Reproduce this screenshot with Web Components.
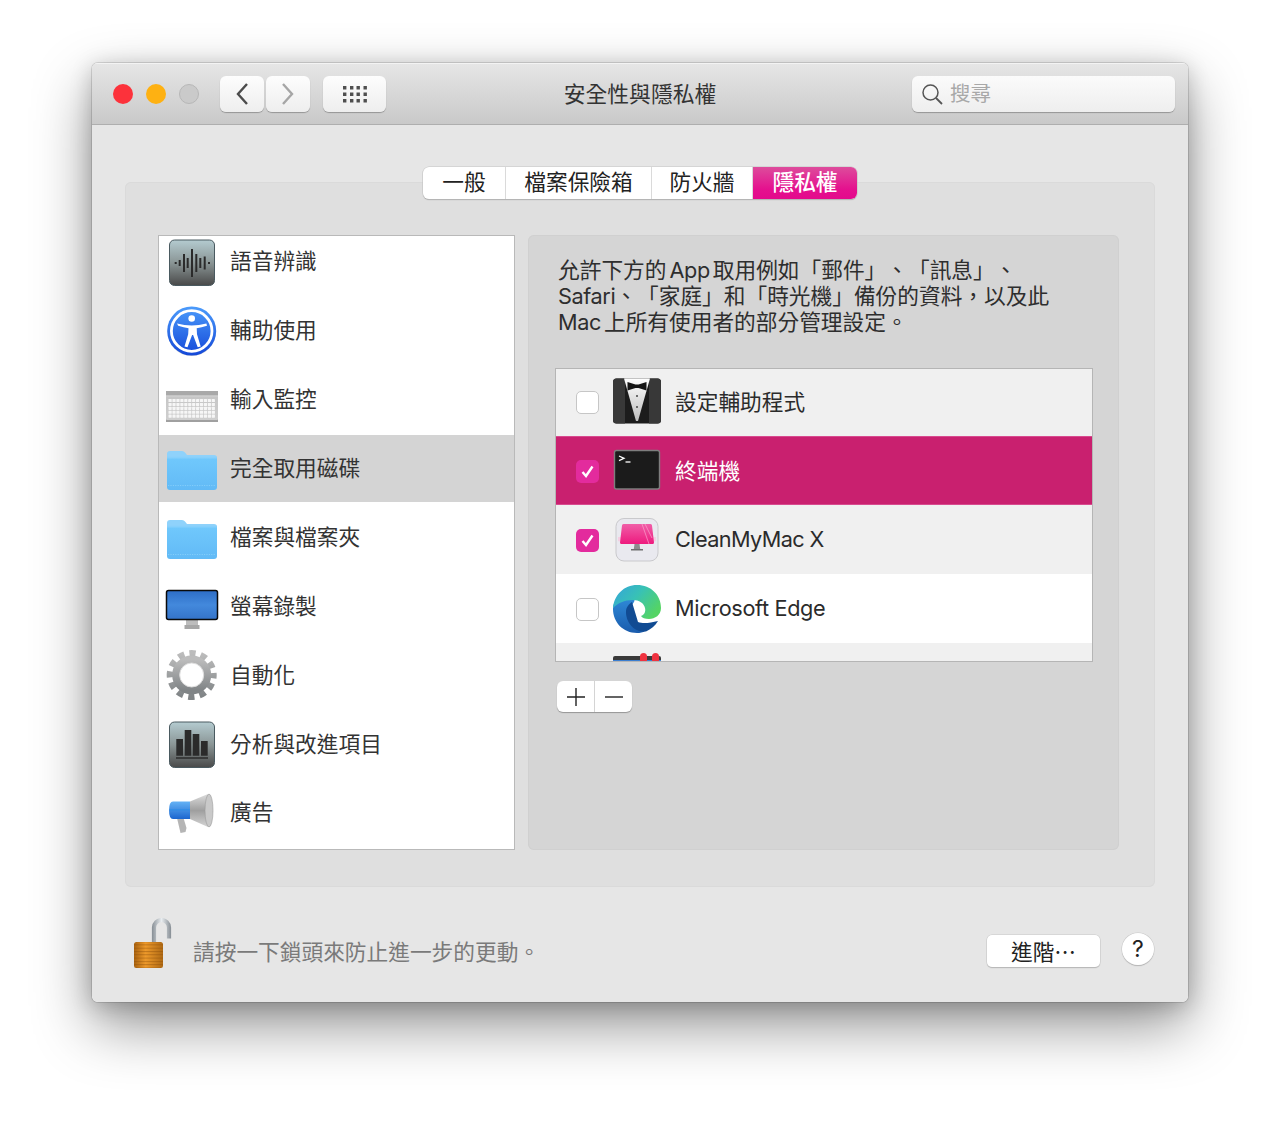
<!DOCTYPE html>
<html lang="zh-Hant">
<head>
<meta charset="utf-8">
<title>安全性與隱私權</title>
<style>
  html, body { margin: 0; background: #fff; }
  body {
    height: 1124px;
    overflow: hidden;
    font-family: "Inter", "Noto Sans CJK TC", sans-serif;
    font-size: 21.7px;
    color: #333;
    text-spacing-trim: space-all;
  }
</style>
</head>
<body>
<mac-window>
  <title-bar slot="top" heading="安全性與隱私權"></title-bar>
  <pref-box>
    <tab-bar slot="tabs">
      <tab-item style="width:83px">一般</tab-item>
      <tab-item style="width:146px">檔案保險箱</tab-item>
      <tab-item style="width:101px">防火牆</tab-item>
      <tab-item style="width:104px" active>隱私權</tab-item>
    </tab-bar>
    <side-list slot="side">
      <side-row icon="speech">語音辨識</side-row>
      <side-row icon="access">輔助使用</side-row>
      <side-row icon="keyboard">輸入監控</side-row>
      <side-row icon="folder" selected>完全取用磁碟</side-row>
      <side-row icon="folder">檔案與檔案夾</side-row>
      <side-row icon="display">螢幕錄製</side-row>
      <side-row icon="gear">自動化</side-row>
      <side-row icon="chart">分析與改進項目</side-row>
      <side-row icon="horn">廣告</side-row>
    </side-list>
    <privacy-panel slot="main">
      允許下方的<span style="margin:0 3px;letter-spacing:-.4px">App</span>取用例如「郵件」、「訊息」、<br><span style="letter-spacing:-.4px">Safari</span>、「家庭」和「時光機」備份的資料，以及此<br><span style="margin-right:3px;letter-spacing:-.4px">Mac</span>上所有使用者的部分管理設定。
      <app-list slot="list">
        <app-row icon="tux" tone="gray">設定輔助程式</app-row>
        <app-row icon="term" tone="sel" checked>終端機</app-row>
        <app-row icon="clean" tone="gray" checked style="letter-spacing:-.6px;--label-top:2px">CleanMyMac X</app-row>
        <app-row icon="edge" tone="white" style="letter-spacing:-.35px;--label-top:2px">Microsoft Edge</app-row>
        <app-row icon="tool" tone="gray"></app-row>
      </app-list>
    </privacy-panel>
  </pref-box>
  <lock-footer slot="bottom">請按一下鎖頭來防止進一步的更動。</lock-footer>
</mac-window>

<script>
class Shadowed extends HTMLElement {
  constructor() {
    super();
    this.attachShadow({ mode: 'open' });
    this.shadowRoot.innerHTML = `<style>${this.constructor.css}</style>${this.constructor.html}`;
  }
}

// row icons: 56x56 box for the side list, 50x50 for the app list
function keyboardKeys() {
  let out = '';
  for (let r = 0; r < 5; r++) {
    for (let c = 0; c < 12; c++) {
      out += `<rect x="${4.5 + c * 3.93}" y="${26 + r * 3.9}" width="3.2" height="3.1" rx=".4" fill="#f6f6f6"/>`;
    }
  }
  return out;
}

const tile = `<defs><linearGradient id="t" x1="0" y1="0" x2="0" y2="1"><stop offset="0" stop-color="#b4cbd0"/><stop offset=".5" stop-color="#8a9595"/><stop offset="1" stop-color="#494949"/></linearGradient></defs>
  <rect x="5.5" y="5" width="45" height="45.5" rx="5" fill="url(#t)" stroke="#4a5a60" stroke-width="1"/>`;

const folder = `<defs><linearGradient id="f" x1="0" y1="0" x2="0" y2="1"><stop offset="0" stop-color="#70c8fc"/><stop offset="1" stop-color="#62baf6"/></linearGradient></defs>
  <path d="M3 13q0-3 3-3h12q2 0 3 1.5l2 2.5h27q3 0 3 3v4H3z" fill="#8fd2fb"/>
  <path d="M3 17h50v29q0 3-3 3H6q-3 0-3-3z" fill="url(#f)"/>
  <path d="M3 15.8h50v1.6H3z" fill="#86d0fc"/>
  <path d="M4 44.5h48" stroke="#8ad2fb" stroke-width=".8" stroke-dasharray="1.2 1.2"/>`;

const ICONS = {
  speech: `${tile}<path d="M11.7 27v2M15.7 25v6M20 19v18M23.7 23v10M28 14v28M32.3 19v18M36.3 23v10M40.7 21.500v13M45 27v2" stroke="#2b2b2b" stroke-width="2" fill="none"/>`,
  access: `<defs><linearGradient id="a" x1="0" y1="0" x2="0" y2="1"><stop offset="0" stop-color="#4b9bfb"/><stop offset="1" stop-color="#1448d8"/></linearGradient></defs>
    <ellipse cx="27.700" cy="28" rx="24" ry="24" fill="#999" opacity=".45"/>
    <circle cx="27.700" cy="27" r="24.500" fill="url(#a)"/>
    <circle cx="27.700" cy="27" r="20.300" fill="none" stroke="#fff" stroke-width="2.800"/>
    <circle cx="27.700" cy="14.500" r="3.300" fill="#fff"/>
    <path d="M13 19.500c5 1.300 10 2 14.700 2s9.700-.7 14.700-2l.6 2.200c-3.700 1.300-7.300 2-10.300 2.500l.3 6 3.700 12.300-3 .8-4.600-12.300h-1l-4.600 12.300-3-.8 3.700-12.300.3-6c-3-.5-6.600-1.200-10.300-2.500z" fill="#fff"/>`,
  keyboard: `<defs><linearGradient id="k" x1="0" y1="0" x2="0" y2="1"><stop offset="0" stop-color="#c4c4c4"/><stop offset="1" stop-color="#cfcfcf"/></linearGradient></defs>
    <rect x="2" y="46" width="52" height="3" fill="#777" opacity=".7"/>
    <rect x="2" y="18" width="52" height="29" rx="1" fill="url(#k)"/>
    <rect x="2" y="18" width="52" height="4.500" fill="#a9a9a9"/>
    <rect x="2" y="22.500" width="52" height="1" fill="#d4d4d4"/>
    ${keyboardKeys()}`,
  folder,
  display: `<defs><linearGradient id="d" x1="0" y1="0" x2="0" y2="1"><stop offset="0" stop-color="#2d6dc6"/><stop offset=".5" stop-color="#4389dc"/><stop offset="1" stop-color="#3473c8"/></linearGradient></defs>
    <path d="M22 40h12v6H22z" fill="#bdbdbd"/><path d="M20.500 46h15v4h-15z" fill="#a7a7a7"/>
    <rect x="2.500" y="11.500" width="51" height="29" rx="2" fill="url(#d)" stroke="#0a0a0a" stroke-width="1.500"/>`,
  gear: `<defs><linearGradient id="g" x1="0" y1="0" x2="0" y2="1"><stop offset="0" stop-color="#bcbcbc"/><stop offset="1" stop-color="#808486"/></linearGradient></defs>
    <circle cx="27.700" cy="27" r="21.500" fill="none" stroke="url(#g)" stroke-width="7" stroke-dasharray="6.260 5" stroke-dashoffset="3"/>
    <circle cx="27.700" cy="27" r="15.500" fill="none" stroke="url(#g)" stroke-width="8"/>
    <circle cx="27.700" cy="27" r="12" fill="#fff" stroke="#dcdcdc" stroke-width="1"/>`,
  chart: `${tile}<path d="M12.300 22h6.700v16.800h-6.700zM20.700 13h6.600v25.800h-6.600zM28.700 17h6.600v21.800h-6.600zM37 24h6.700v14.800H37z" fill="#2b2b2b"/><path d="M12 41h32" stroke="#2b2b2b" stroke-width="1.500"/>`,
  horn: `<defs><linearGradient id="b" x1="0" y1="0" x2="0" y2="1"><stop offset="0" stop-color="#64b2f5"/><stop offset="1" stop-color="#1c66cf"/></linearGradient>
    <linearGradient id="c" x1="0" y1="0" x2="0" y2="1"><stop offset="0" stop-color="#dcdcdc"/><stop offset=".5" stop-color="#9f9f9f"/><stop offset="1" stop-color="#d4d4d4"/></linearGradient></defs>
    <path d="M13 32l3.500 15 5-1 1-4-3-10z" fill="#b5b5b5"/>
    <path d="M26 15.500L44 8v33l-18-8z" fill="url(#c)"/>
    <ellipse cx="45" cy="24.500" rx="4" ry="16.500" fill="#c9c9c9" stroke="#9a9a9a" stroke-width=".6"/>
    <path d="M9 15.500h17v17.500H9q-4 0-4-8.700t4-8.800z" fill="url(#b)"/>
    <path d="M5.500 23h20.500v1.500H5.500z" fill="#1c8ae8" opacity=".4"/>`,
  tux: `<defs><linearGradient id="s" x1="0" y1="0" x2="0" y2="1"><stop offset="0" stop-color="#fff"/><stop offset="1" stop-color="#bdbdbd"/></linearGradient></defs>
    <rect x="1" y="2.500" width="48" height="45" rx="3.500" fill="#1c1c1c"/>
    <path d="M1 6q0-3.500 3.500-3.500H13v45H4.500Q1 47.500 1 44zM37 2.500h8.500Q49 2.500 49 6v38q0 3.500-3.500 3.500H37z" fill="#383838"/>
    <path d="M12 2.500h26L26 45h-2z" fill="url(#s)"/>
    <path d="M15.500 6l8 2.500h3l8-2.500v8.500l-8-2.500h-3l-8 2.500z" fill="#151515"/>
    <circle cx="25" cy="20" r="1" fill="#444"/><circle cx="25" cy="31" r="1" fill="#444"/>`,
  term: `<g transform="translate(0 3)"><rect x="2.500" y="2.500" width="45" height="38.500" rx="2" fill="#1b1b1b" stroke="#7e7e7e" stroke-width="1.400"/>
    <path d="M7 8l5 2.300-5 2.300" fill="none" stroke="#fff" stroke-width="1.300"/><path d="M13.500 14h5" stroke="#fff" stroke-width="1.300"/></g>`,
  clean: `<defs><linearGradient id="m" x1="0" y1="0" x2="0" y2="1"><stop offset="0" stop-color="#f05ea8"/><stop offset="1" stop-color="#ee1a7e"/></linearGradient></defs>
    <g transform="translate(0 3)"><rect x="4" y="1.500" width="42" height="42.500" rx="8" fill="#e9e9ef" stroke="#c9c9cc"/>
    <path d="M6 24c8 3 30 3 38 0v-4H6z" fill="#f8c7de" opacity=".8"/>
    <path d="M10 8.500q0-1.500 1.500-1.500h27q1.500 0 1.500 1.500l2 17q0 1.500-1.500 1.500h-31Q8 27 8 25.500z" fill="url(#m)"/>
    <path d="M30 7l7 20M33 7l7 14" stroke="#fbb1d6" stroke-width=".6" fill="none"/>
    <path d="M22.500 27h5l.7 5h-6.400z" fill="#8d8d8d"/><path d="M19 32h12v1.500H19z" fill="#6d6d6d"/></g>`,
  edge: `<defs><linearGradient id="e1" x1="0" y1="0" x2="1" y2=".6"><stop offset="0" stop-color="#34a3dc"/><stop offset=".5" stop-color="#38c1b6"/><stop offset="1" stop-color="#54d465"/></linearGradient>
    <linearGradient id="e2" x1="0" y1="0" x2="0" y2="1"><stop offset="0" stop-color="#2f8ad8"/><stop offset="1" stop-color="#1a5cad"/></linearGradient></defs>
    <g transform="translate(1 2)">
    <path d="M0 24C0 20 1 18 3 16c5-4 12-4 17-2 3 1 1 3-1 6-2 4-2 9 1 14 2 4 6 8 12 12-2 1.500-5 2-8 2C10 48 0 37 0 24z" fill="url(#e2)"/>
    <path d="M13 27c0-5 3-8 6-10l6 20c5 2 12 1 20-1-3 5-7 8-12 10.500C22 48 13 38 13 27z" fill="#114b93"/>
    <path d="M0 23C1 10 11 0 24 0c14 0 24 10 24 23 0 7-6 11-12 11-4 0-7-1-8-3 3-1 5-4 4-8-1-5-6-8-12-8C11 15 5 18 0 23z" fill="url(#e1)"/>
    </g>`,
  tool: `<defs><linearGradient id="u" x1="0" y1="0" x2="0" y2="1"><stop offset="0" stop-color="#3a3a3a"/><stop offset=".1" stop-color="#3a3a3a"/><stop offset=".11" stop-color="#3b7ed0"/></linearGradient></defs>
    <rect x="1" y="4" width="48" height="40" rx="2" fill="url(#u)"/>
    <rect x="28" y="1" width="7" height="20" rx="3.500" fill="#ef3340"/><rect x="40" y="1" width="7" height="20" rx="3.500" fill="#ef3340"/>`
};

class MacWindow extends Shadowed {
  static css = `
    :host { display: block; width: 1096px; height: 939px; margin: 63px 0 0 92px; }
    .win {
      display: flex; flex-direction: column; height: 100%; box-sizing: border-box;
      background: #e6e6e6; border-radius: 6px; overflow: hidden;
    }
    .shade { height: 100%; border-radius: 6px;
      box-shadow: 0 24px 58px rgba(0,0,0,.42), 0 0 0 1px rgba(0,0,0,.12), 0 4px 22px rgba(0,0,0,.2); }`;
  static html = `<div class="shade"><div class="win"><slot name="top"></slot><slot></slot><slot name="bottom"></slot></div></div>`;
}

class TitleBar extends Shadowed {
  static css = `
    :host { display: block; }
    .bar {
      display: grid; grid-template-columns: minmax(0, 1fr) auto minmax(0, 1fr); align-items: center;
      height: 62px; box-sizing: border-box; padding: 0 13px;
      background: linear-gradient(#e6e6e6, #c9c9c9);
      border-bottom: 1px solid #aeaeae; box-shadow: inset 0 1px 0 #f3f3f3;
    }
    .left { display: flex; align-items: center; padding-left: 8px; }
    .dot { width: 20px; height: 20px; border-radius: 50%; margin-right: 13px; box-sizing: border-box; }
    .r { background: #fc323b; } .y { background: #feb112; }
    .g { background: #cacaca; border: 1px solid #b7b7b7; }
    .nav { display: flex; gap: 2px; margin-left: 8px; }
    .btn {
      height: 36px; width: 44px; border-radius: 6px; display: flex; align-items: center; justify-content: center;
      background: linear-gradient(#fdfdfd, #eeeeee); box-shadow: 0 1px 1px rgba(0,0,0,.28);
    }
    .wide { width: 63px; margin-left: 13px; }
    h1 { margin: -3px 0 0; font: inherit; font-size: 21.8px; color: #333; }
    .search {
      justify-self: end; width: 263px; height: 36px; border-radius: 6px; box-sizing: border-box; padding-left: 9px;
      display: flex; align-items: center; gap: 7px; color: #a8a8a8;
      background: linear-gradient(#fbfbfb, #eeeeee); box-shadow: 0 1px 1px rgba(0,0,0,.28);
    }
    .search span { margin-top: -4px; font-size: 20.500px; }`;
  static html = `
    <div class="bar">
      <div class="left">
        <div class="dot r"></div><div class="dot y"></div><div class="dot g"></div>
        <div class="nav">
          <div class="btn"><svg width="14" height="24" viewBox="0 0 14 24"><path d="M12 2L3 12l9 10" fill="none" stroke="#4c4c4c" stroke-width="2.400"/></svg></div>
          <div class="btn"><svg width="14" height="24" viewBox="0 0 14 24"><path d="M2 2l9 10-9 10" fill="none" stroke="#a6a6a6" stroke-width="2.400"/></svg></div>
        </div>
        <div class="btn wide"><svg width="26" height="18" viewBox="0 0 26 18" fill="#4f4f4f">
          <path d="M1 1h3.400v3.400H1zM8 1h3.400v3.400H8zM14.500 1h3.400v3.400h-3.400zM21.500 1h3.400v3.400h-3.400zM1 7.500h3.400v3.400H1zM8 7.500h3.400v3.400H8zM14.500 7.500h3.400v3.400h-3.400zM21.500 7.500h3.400v3.400h-3.400zM1 14h3.400v3.400H1zM8 14h3.400v3.400H8zM14.500 14h3.400v3.400h-3.400zM21.500 14h3.400v3.400h-3.400z"/></svg></div>
      </div>
      <h1></h1>
      <div class="search">
        <svg width="22" height="22" viewBox="0 0 22 22"><circle cx="9.500" cy="9.500" r="7.500" fill="none" stroke="#555" stroke-width="1.500"/><path d="M15 15l6 6" stroke="#555" stroke-width="1.800"/></svg>
        <span>搜尋</span>
      </div>
    </div>`;
  connectedCallback() { this.shadowRoot.querySelector('h1').textContent = this.getAttribute('heading'); }
}

class PrefBox extends Shadowed {
  static css = `
    :host { display: block; margin: 57px 33px 0; height: 705px; }
    .box { height: 100%; background: #dfdfdf; border-radius: 6px; box-shadow: inset 0 0 0 1px #dadada; display: flex; flex-direction: column; align-items: center; }
    .tabs { margin-top: -15px; height: 32px; }
    .cols { display: flex; gap: 13px; margin-top: 36px; height: 615px; align-self: stretch; padding: 0 36px 0 33px; }`;
  static html = `<div class="box"><div class="tabs"><slot name="tabs"></slot></div>
    <div class="cols"><slot name="side"></slot><slot name="main"></slot></div></div>`;
}

class TabBar extends Shadowed {
  static css = `
    :host { display: flex; height: 32px; border-radius: 6px; background: #fff; box-shadow: 0 0 0 .5px #c4c4c4, 0 1px 1px rgba(0,0,0,.28); overflow: hidden; }`;
  static html = `<slot></slot>`;
}

class TabItem extends Shadowed {
  static css = `
    :host { display: flex; align-items: center; justify-content: center; box-sizing: border-box; padding-bottom: 2px; color: #222; border-right: 1px solid #dadada; line-height: 30px; white-space: nowrap; }
    :host([active]) { color: #fff; font-weight: 500; border-right: 0;
      background: linear-gradient(#dd4c9c, #e5108e 70%, #e30a8c); }`;
  static html = `<slot></slot>`;
}

class SideList extends Shadowed {
  static css = `
    :host { display: block; width: 357px; height: 615px; box-sizing: border-box; background: #fff; border: 1px solid #b9b9b9; overflow: hidden; }
    .inner { display: flex; flex-direction: column; gap: 1.900px; margin-top: -7.700px; }`;
  static html = `<div class="inner"><slot></slot></div>`;
}

class SideRow extends Shadowed {
  static css = `
    :host { display: flex; align-items: center; height: 67px; padding-left: 5px; color: #333; }
    :host([selected]) { background: #d4d4d4; }
    #i { display: contents; }
    svg { flex: none; display: block; margin: 2px 10px 0 0; }
    .label { margin-top: -4px; }`;
  static html = `<span id="i"></span><span class="label"><slot></slot></span>`;
  connectedCallback() {
    this.shadowRoot.getElementById('i').innerHTML =
      `<svg width="56" height="56" viewBox="0 0 56 56">${ICONS[this.getAttribute('icon')]}</svg>`;
  }
}

class PrivacyPanel extends Shadowed {
  static css = `
    :host { display: block; width: 591px; height: 615px; box-sizing: border-box; padding: 22px 26px 0 27px; background: #d5d5d5; border-radius: 6px; box-shadow: inset 0 0 0 1px #d0d0d0; }
    p { margin: 0 0 33px 3px; line-height: 26px; color: #2e2e2e; white-space: nowrap; height: 78px; }
    .tools { display: flex; width: 75px; height: 31px; margin: 19px 0 0 2px; background: #fff; border-radius: 6px; box-shadow: 0 1px 1px rgba(0,0,0,.3); }
    .tools div { flex: 1; display: flex; align-items: center; justify-content: center; }
    .tools div + div { border-left: 1px solid #d4d4d4; }`;
  static html = `<p><slot></slot></p><slot name="list"></slot>
    <div class="tools">
      <div><svg width="20" height="20" viewBox="0 0 20 20"><path d="M10 1v18M1 10h18" stroke="#222" stroke-width="1.400"/></svg></div>
      <div><svg width="20" height="20" viewBox="0 0 20 20"><path d="M1 10h18" stroke="#222" stroke-width="1.400"/></svg></div>
    </div>`;
}

class AppList extends Shadowed {
  static css = `
    :host { display: block; width: 538px; height: 294px; box-sizing: border-box; background: #fff; border: 1px solid #b5b5b5; overflow: hidden; }
    .inner { margin-top: -2px; }`;
  static html = `<div class="inner"><slot></slot></div>`;
}

class AppRow extends Shadowed {
  static css = `
    :host { display: flex; align-items: center; height: 68.900px; box-sizing: border-box; padding-left: 20px; color: #2b2b2b; }
    :host([tone="gray"]) { background: #f0f0f0; }
    :host([tone="white"]) { background: #fff; }
    :host([tone="sel"]) { background: #c9206f; color: #fff; box-shadow: inset 0 1px 0 #d84a8e, inset 0 -1px 0 #d84a8e; }
    .box { width: 23px; height: 23px; margin-top: 3px; border-radius: 5px; box-sizing: border-box; background: #fff; border: 1px solid #c6c6c6; margin-right: 13px; flex: none; display: flex; align-items: center; justify-content: center; }
    :host([checked]) .box { background: #e32b9d; border: 0; }
    .box svg { display: none; }
    :host([checked]) .box svg { display: block; }
    #i { display: contents; }
    .ico { display: block; margin-right: 13px; flex: none; }
    .label { margin-top: calc(var(--label-top, 0px) - 2px); }`;
  static html = `<div class="box"><svg width="15" height="15" viewBox="0 0 15 15"><path d="M2.500 8l3.500 4L12.500 2.500" fill="none" stroke="#fff" stroke-width="2.400"/></svg></div><span id="i"></span><span class="label"><slot></slot></span>`;
  connectedCallback() {
    this.shadowRoot.getElementById('i').innerHTML =
      `<svg class="ico" width="50" height="50" viewBox="0 0 50 50">${ICONS[this.getAttribute('icon')]}</svg>`;
  }
}

class LockFooter extends Shadowed {
  static css = `
    :host { display: flex; flex: 1; align-items: flex-start; padding: 31px 34px 0 41px; color: #7a7a7a; }
    .lock { display: block; flex: none; margin-right: 20px; }
    .msg { margin-top: 21px; line-height: 26px; flex: 1; }
    .more {
      width: 113px; height: 32px; margin-top: 17px; border-radius: 5px; background: #fff; color: #222;
      display: flex; align-items: center; justify-content: center; box-shadow: 0 0 0 .5px #c8c8c8, 0 1px 1px rgba(0,0,0,.28);
    }
    .more span { margin-top: -2px; }
    .help {
      width: 32px; height: 32px; margin: 15px 0 0 22px; border-radius: 50%; background: #fff; color: #222; font-size: 23px;
      display: flex; align-items: center; justify-content: center; box-shadow: 0 0 0 .5px #c8c8c8, 0 1px 1px rgba(0,0,0,.28);
    }`;
  static html = `
    <svg class="lock" width="40" height="52" viewBox="0 0 40 52">
      <defs>
        <linearGradient id="sh" gradientUnits="userSpaceOnUse" x1="18" y1="0" x2="39" y2="0"><stop offset="0" stop-color="#7d858c"/><stop offset=".5" stop-color="#e8ecef"/><stop offset="1" stop-color="#7d858c"/></linearGradient>
        <linearGradient id="bd" x1="0" y1="0" x2="1" y2="0"><stop offset="0" stop-color="#a9620f"/><stop offset=".4" stop-color="#ee9a2b"/><stop offset="1" stop-color="#b06a14"/></linearGradient>
        <pattern id="rg" width="4" height="3.300" patternUnits="userSpaceOnUse"><rect width="4" height="1" fill="#8a4c08" opacity=".45"/></pattern>
      </defs>
      <path d="M21 26V9.500a7.500 7.500 0 0 1 15 0v11" fill="none" stroke="url(#sh)" stroke-width="4.200"/>
      <rect x="1" y="24" width="29" height="26" rx="2.500" fill="url(#bd)"/>
      <rect x="1" y="24" width="29" height="26" rx="2.500" fill="url(#rg)"/>
    </svg>
    <span class="msg"><slot></slot></span>
    <div class="more"><span>進階⋯</span></div>
    <div class="help">?</div>`;
}

customElements.define('mac-window', MacWindow);
customElements.define('title-bar', TitleBar);
customElements.define('pref-box', PrefBox);
customElements.define('tab-bar', TabBar);
customElements.define('tab-item', TabItem);
customElements.define('side-list', SideList);
customElements.define('side-row', SideRow);
customElements.define('privacy-panel', PrivacyPanel);
customElements.define('app-list', AppList);
customElements.define('app-row', AppRow);
customElements.define('lock-footer', LockFooter);
</script>
</body>
</html>
